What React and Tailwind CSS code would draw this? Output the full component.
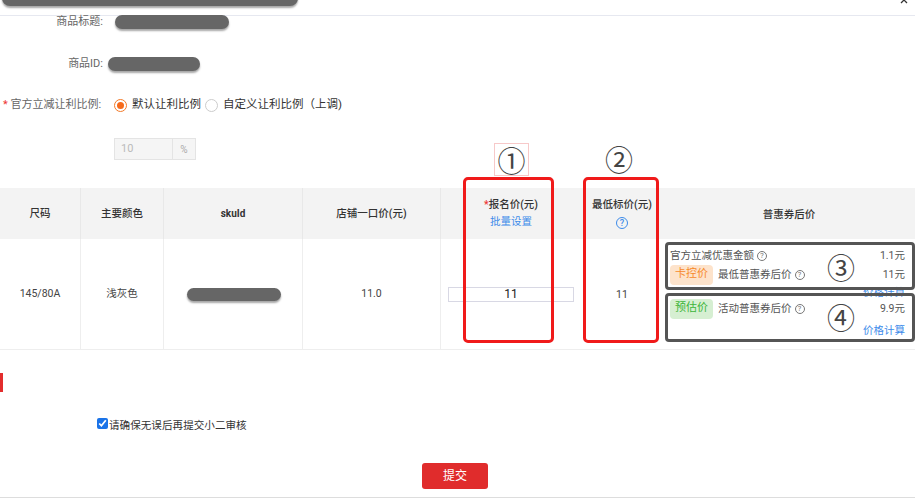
import React from 'react';

const cjk = "font-['Roboto','Noto_Sans_CJK_SC',sans-serif]";

function Pill({ className }) {
  return <div className={`rounded-full bg-[#666] shadow-[0_2px_2px_rgba(0,0,0,0.35)] ${className}`} />;
}

function Help({ blue }) {
  return (
    <span
      className={`inline-flex items-center justify-center rounded-full border leading-none ${
        blue ? 'w-[12px] h-[12px] border-[#3d8bea] text-[#3d8bea] text-[9px]' : 'w-[10px] h-[10px] border-[#777] text-[#777] text-[8px]'
      }`}
    >
      ?
    </span>
  );
}

function Tag({ children, tone }) {
  const cls = tone === 'orange' ? 'bg-[#fde3cb] text-[#f7892a]' : 'bg-[#d6efd2] text-[#3db53a]';
  return <span className={`inline-flex items-center justify-center w-[43px] h-[20px] rounded-[4px] text-[11px] ${cls}`}>{children}</span>;
}

export default function App() {
  const cols = 'grid grid-cols-[81px_83px_139px_138px_140px_82px_252px]';
  const digit = "absolute text-[28px] leading-none text-[#444] font-['Noto_Sans_CJK_SC',sans-serif]";
  return (
    <div className={`relative w-[915px] h-[503px] overflow-hidden bg-white text-[11px] text-[#666] ${cjk}`}>
      {/* top strip */}
      <div className="h-[16px] border-b border-[#e6e8f0] flex justify-between">
        <Pill className="ml-[2px] -mt-[10px] w-[296px] h-[16px]" />
        <svg width="8" height="8" viewBox="0 0 8 8" className="mr-[7px] -mt-[4px]">
          <path d="M1 1L7 7M7 1L1 7" stroke="#333" strokeWidth="1.3" />
        </svg>
      </div>

      {/* 商品标题 */}
      <div className="-mt-[1px] h-[14px] flex items-center">
        <span className="w-[103px] text-right">商品标题:</span>
        <Pill className="ml-[12px] w-[114px] h-[14px]" />
      </div>

      {/* 商品ID */}
      <div className="mt-[28px] h-[14px] flex items-center">
        <span className="w-[103px] text-right">商品ID:</span>
        <Pill className="ml-[5px] w-[92px] h-[14px]" />
      </div>

      {/* radio */}
      <div className="mt-[26px] h-[16px] flex items-center">
        <span className="w-[103px] pl-[3px] whitespace-nowrap">
          <span className="text-[#e33]">*</span> 官方立减让利比例:
        </span>
        <span className="ml-[11px] w-[13px] h-[13px] rounded-full border border-[#f27a2a] flex items-center justify-center">
          <span className="w-[7px] h-[7px] rounded-full bg-[#f66a1a]" />
        </span>
        <span className="ml-[5px] text-[11.5px] text-[#333]">默认让利比例</span>
        <span className="ml-[4px] w-[13px] h-[13px] rounded-full border border-[#ccc]" />
        <span className="ml-[5px] text-[11.5px] text-[#333]">自定义让利比例（上调)</span>
      </div>

      {/* ratio input */}
      <div className="mt-[25px] ml-[114px] h-[22px] flex">
        <div className="w-[59px] h-full bg-[#f5f5f5] border border-[#e4e4e4] flex items-center pl-[6px] text-[#bbb]">10</div>
        <div className="w-[23px] h-full bg-[#f5f5f5] border border-l-0 border-[#e4e4e4] flex items-center justify-center text-[#aaa] text-[10px]">%</div>
      </div>

      {/* table */}
      <div className="mt-[28px]">
        <div className={`${cols} h-[51px] bg-[#f3f3f3] text-[#333] font-medium text-[10.5px]`}>
          <div className="flex items-center justify-center border-r border-[#e8e8e8]">尺码</div>
          <div className="flex items-center justify-center border-r border-[#e8e8e8]">主要颜色</div>
          <div className="flex items-center justify-center border-r border-[#e8e8e8] font-bold text-[10px]">skuId</div>
          <div className="flex items-center justify-center border-r border-[#e8e8e8]">店铺一口价(元)</div>
          <div className="flex flex-col items-center justify-center">
            <span><span className="text-[#e33]">*</span>报名价(元)</span>
            <span className="text-[#3d8bea] font-normal mt-[1px]">批量设置</span>
          </div>
          <div className="flex flex-col items-center justify-center">
            <span>最低标价(元)</span>
            <span className="mt-[2px]"><Help blue /></span>
          </div>
          <div className="flex items-center justify-center pt-[2px]">普惠券后价</div>
        </div>

        <div className={`${cols} h-[111px] border-b border-[#eee] text-[#444] text-[10.5px]`}>
          <div className="flex items-center justify-center border-r border-[#eee] pb-[1px]">145/80A</div>
          <div className="flex items-center justify-center border-r border-[#eee]">浅灰色</div>
          <div className="flex items-center justify-center border-r border-[#eee] pl-[2px]">
            <Pill className="w-[94px] h-[13px]" />
          </div>
          <div className="flex items-center justify-center border-r border-[#eee]">11.0</div>
          <div className="flex items-center pl-[7px]">
            <div className="w-[126px] h-[15px] border border-[#d8d8e4] flex items-center justify-center text-[12px] text-[#222]">11</div>
          </div>
          <div className="flex items-center justify-center pt-[2px]">11</div>
          <div className="flex flex-col pl-[7px] pr-[10px] text-[10.5px] text-[#555]">
            <div className="mt-[11px] h-[12px] flex items-center justify-between">
              <span className="flex items-center gap-[3px]">官方立减优惠金额 <Help /></span>
              <span>1.1元</span>
            </div>
            <div className="mt-[3px] h-[19px] flex items-center justify-between">
              <span className="flex items-center gap-[5px]">
                <Tag tone="orange">卡控价</Tag>
                <span className="flex items-center gap-[3px]">最低普惠券后价 <Help /></span>
              </span>
              <span>11元</span>
            </div>
            <div className="mt-[3px] h-[12px] flex items-center justify-end text-[#3d8bea]">价格计算</div>
            <div className="-mt-[1px] h-[21px] flex items-center justify-between">
              <span className="flex items-center gap-[5px]">
                <Tag tone="green">预估价</Tag>
                <span className="flex items-center gap-[3px]">活动普惠券后价 <Help /></span>
              </span>
              <span>9.9元</span>
            </div>
            <div className="mt-[6px] h-[12px] flex items-center justify-end text-[#3d8bea]">价格计算</div>
          </div>
        </div>
      </div>

      {/* red marker */}
      <div className="mt-[23px] w-[3px] h-[19px] bg-[#e32d2d]" />

      {/* confirm */}
      <div className="mt-[24px] ml-[97px] h-[16px] flex items-start">
        <input type="checkbox" checked readOnly className="m-0 mt-[2px] w-[11px] h-[11px] accent-[#1a73e8]" />
        <span className="ml-[1px] mt-[3px] leading-[14px] text-[10.6px] text-[#333]">请确保无误后再提交小二审核</span>
      </div>

      {/* submit */}
      <div className="mt-[31px] ml-[422px] w-[66px] h-[26px] rounded-[3px] bg-[#e02c2c] flex items-center justify-center text-white text-[12px]">
        提交
      </div>
      <div className="mt-[8px] border-t border-[#ddd]" />

      {/* annotations */}
      <div className="absolute left-[494px] top-[143px] w-[35px] h-[33px] border border-[#f7c9c9] flex items-center justify-center text-[28px] leading-none text-[#444] font-['Noto_Sans_CJK_SC',sans-serif]">①</div>
      <div className={`${digit} left-[605px] top-[145px]`}>②</div>
      <div className="absolute left-[463px] top-[177px] w-[91px] h-[166px] border-[3px] border-[#f01a1a] rounded-[5px]" />
      <div className="absolute left-[583px] top-[177px] w-[76px] h-[166px] border-[3px] border-[#f01a1a] rounded-[5px]" />
      <div className="absolute left-[665px] top-[242px] w-[250px] h-[48px] border-[3px] border-[#555] rounded-[4px]" />
      <div className="absolute left-[665px] top-[293px] w-[250px] h-[49px] border-[3px] border-[#555] rounded-[4px]" />
      <div className={`${digit} left-[827px] top-[253px]`}>③</div>
      <div className={`${digit} left-[827px] top-[303px]`}>④</div>
    </div>
  );
}
